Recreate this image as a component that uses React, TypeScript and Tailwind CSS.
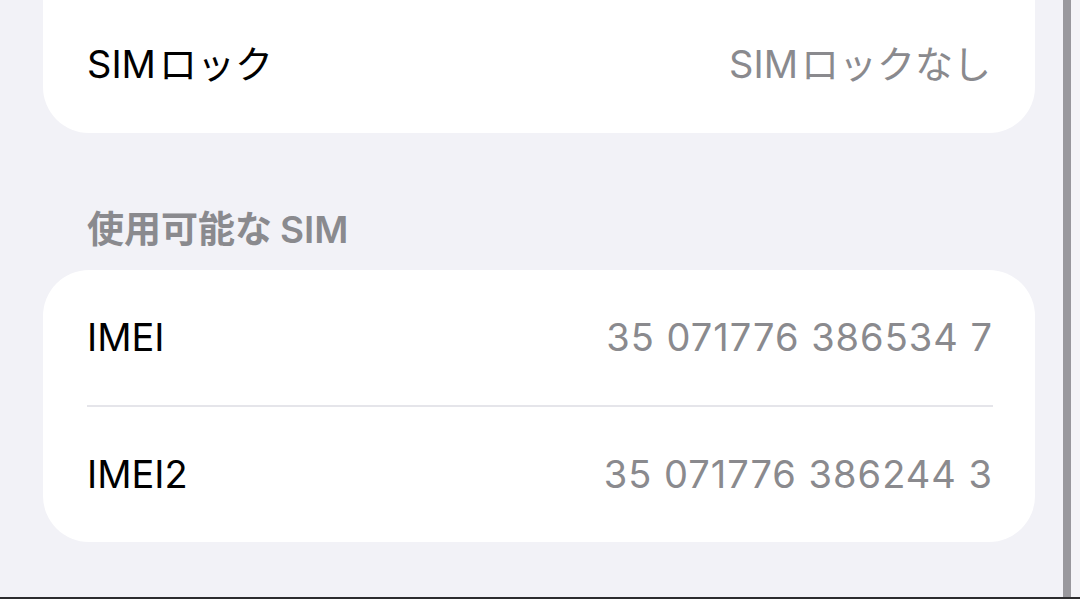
const rows = [
  { label: 'IMEI', value: '35 071776 386534 7' },
  { label: 'IMEI2', value: '35 071776 386244 3' },
];

const font = 'font-["Inter","Noto_Sans_CJK_JP",sans-serif]';

function Row({ label, value }: { label: string; value: string }) {
  return (
    <div className="flex h-[135px] items-center justify-between pl-[44px] pr-[42px] text-[38px]">
      <span className="text-black">{label}</span>
      <span className="tracking-[1px] text-[#8a8a8e]">{value}</span>
    </div>
  );
}

export default function App() {
  return (
    <div className={`flex h-[599px] w-[1080px] overflow-hidden border-b-2 border-[#2c2c2e] bg-[#f2f2f7] ${font}`}>
      <main className="w-[1063px] pl-[43px] pr-[28px]">
        <section className="-mt-[40px] flex h-[173px] items-end rounded-b-[46px] bg-white">
          <div className="flex h-[137px] w-full items-center justify-between pl-[44px] pr-[44px] text-[38px]">
            <span className="text-black">
              SIM<span className="ml-[3px]">ロック</span>
            </span>
            <span className="text-[#8a8a8e]">
              SIM<span className="ml-[3px]">ロックなし</span>
            </span>
          </div>
        </section>

        <h2 className="flex h-[137px] items-end pb-[13px] pl-[44px] text-[37px] font-semibold text-[#8a8a8e]">
          使用可能な<span className="ml-[8px]">SIM</span>
        </h2>

        <section className="rounded-[46px] bg-white">
          <Row {...rows[0]} />
          <div className="ml-[44px] mr-[42px] h-[2px] bg-[#e5e5ea]" />
          <Row {...rows[1]} />
        </section>
      </main>
      <div className="w-[8px] bg-[#99989d]" />
      <div className="flex-1 bg-[#f4f4f7]" />
    </div>
  );
}
